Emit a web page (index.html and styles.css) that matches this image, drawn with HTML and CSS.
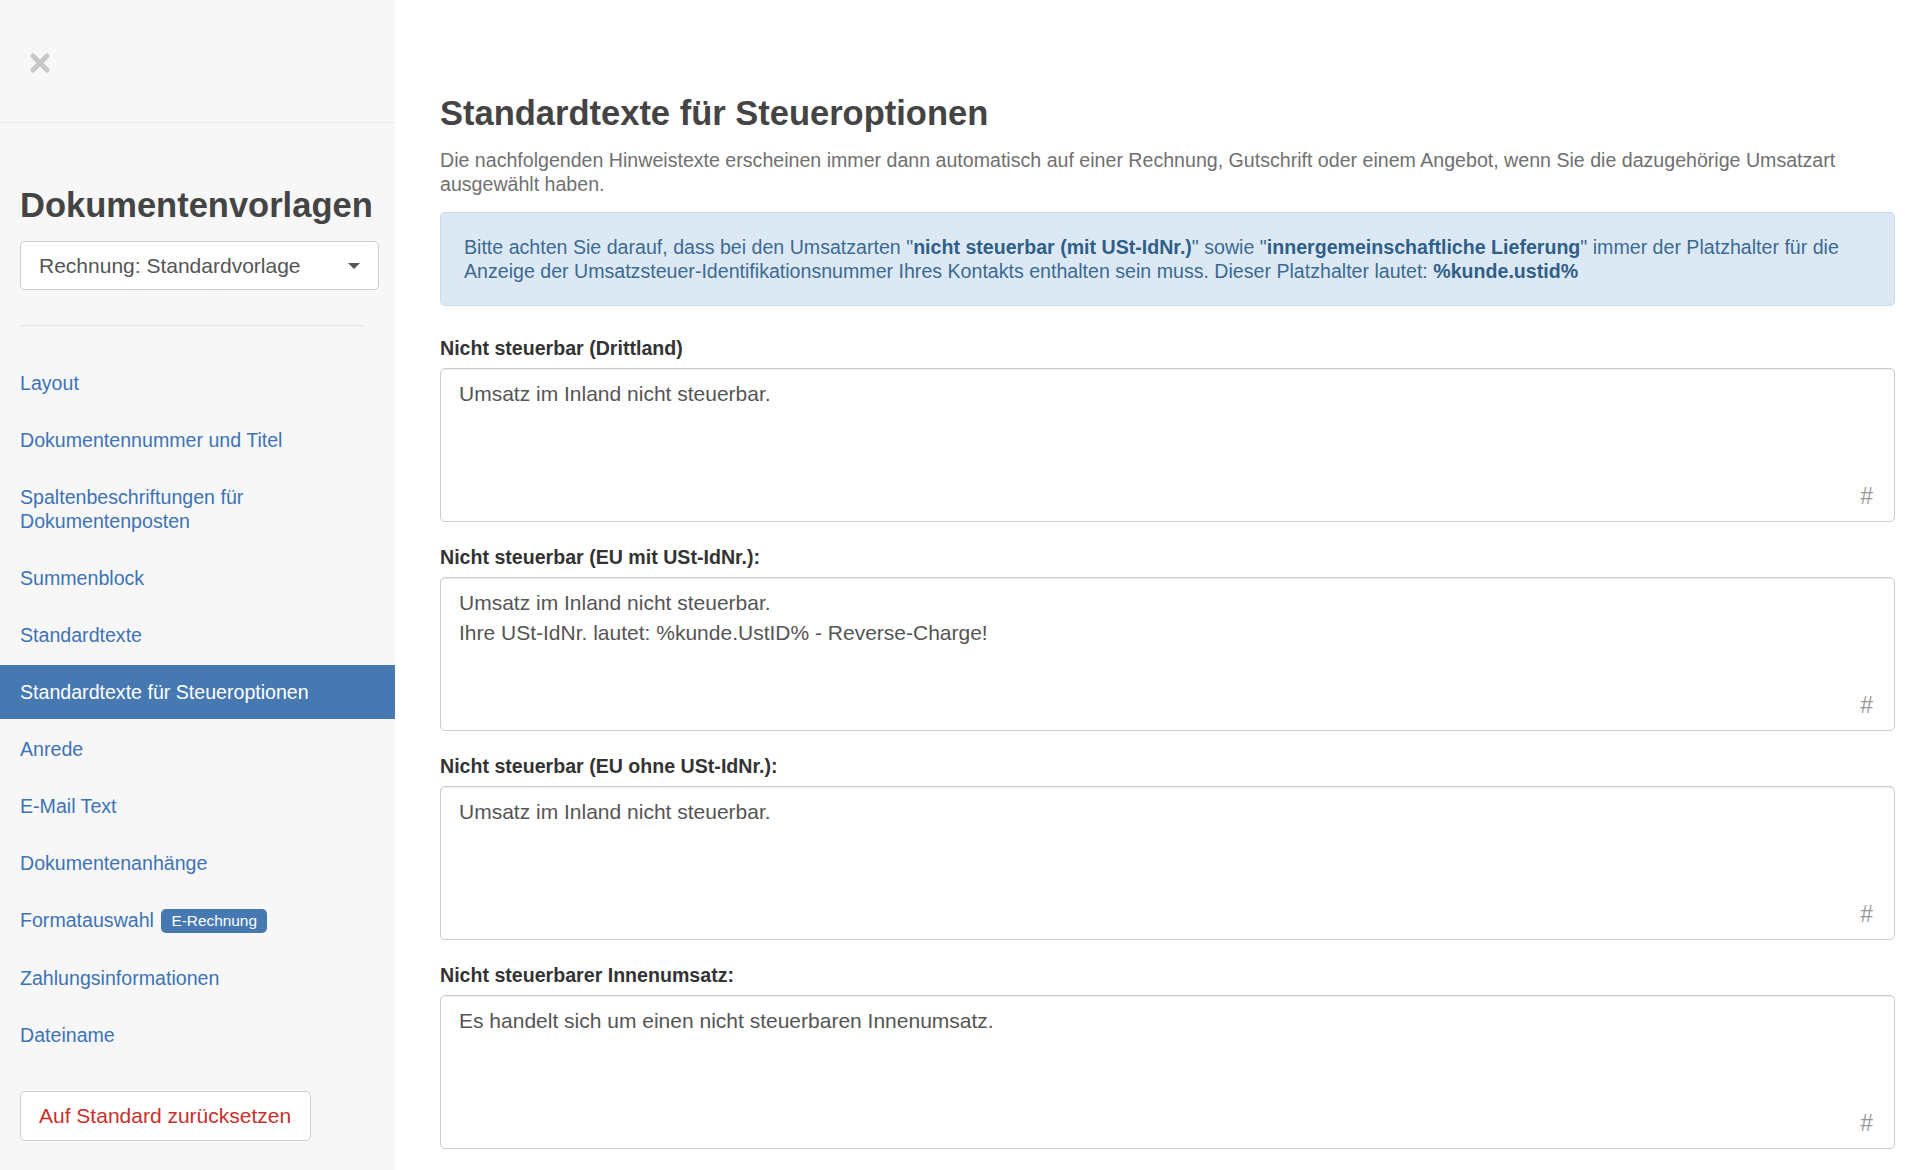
FILE: index.html
```html
<!DOCTYPE html>
<html lang="de">
<head>
    <meta charset="UTF-8">
    <title>Dokumentenvorlagen</title>
    <link rel="stylesheet" href="styles.css">
</head>
<body>
    <aside class="sidebar">
        <div class="sidebar-top">
            <svg class="close-icon" width="22" height="22" viewBox="0 0 22 22">
                <path d="M4 4 L18 18 M18 4 L4 18" stroke="#c8c8c8" stroke-width="5" stroke-linecap="round"/>
            </svg>
        </div>

        <h2 class="sidebar-title">Dokumentenvorlagen</h2>
        <div class="template-select">
            <span>Rechnung: Standardvorlage</span>
            <span class="caret"></span>
        </div>
        <hr class="sidebar-divider">

        <!-- Navigation der Vorlagen-Abschnitte -->
        <ul class="nav">
            <li><a href="#">Layout</a></li>
            <li><a href="#">Dokumentennummer und Titel</a></li>
            <li><a href="#">Spaltenbeschriftungen für Dokumentenposten</a></li>
            <li><a href="#">Summenblock</a></li>
            <li><a href="#">Standardtexte</a></li>
            <li class="active"><a href="#">Standardtexte für Steueroptionen</a></li>
            <li><a href="#">Anrede</a></li>
            <li><a href="#">E-Mail Text</a></li>
            <li><a href="#">Dokumentenanhänge</a></li>
            <li><a href="#">Formatauswahl <span class="badge">E-Rechnung</span></a></li>
            <li><a href="#">Zahlungsinformationen</a></li>
            <li><a href="#">Dateiname</a></li>
        </ul>

        <button class="reset-btn">Auf Standard zurücksetzen</button>
    </aside>

    <main class="content">
        <h1>Standardtexte für Steueroptionen</h1>
        <p class="lead">Die nachfolgenden Hinweistexte erscheinen immer dann automatisch auf einer Rechnung, Gutschrift oder einem Angebot, wenn Sie die dazugehörige Umsatzart ausgewählt haben.</p>

        <div class="alert-info">
            Bitte achten Sie darauf, dass bei den Umsatzarten "<b>nicht steuerbar (mit USt-IdNr.)</b>" sowie "<b>innergemeinschaftliche Lieferung</b>" immer der Platzhalter für die Anzeige der Umsatzsteuer-Identifikationsnummer Ihres Kontakts enthalten sein muss. Dieser Platzhalter lautet: <b>%kunde.ustid%</b>
        </div>

        <div class="form-group">
            <label>Nicht steuerbar (Drittland)</label>
            <div class="field-box">
                <textarea>Umsatz im Inland nicht steuerbar.</textarea>
                <span class="hash">#</span>
            </div>
        </div>

        <div class="form-group">
            <label>Nicht steuerbar (EU mit USt-IdNr.):</label>
            <div class="field-box">
                <textarea>Umsatz im Inland nicht steuerbar.
Ihre USt-IdNr. lautet: %kunde.UstID% - Reverse-Charge!</textarea>
                <span class="hash">#</span>
            </div>
        </div>

        <div class="form-group">
            <label>Nicht steuerbar (EU ohne USt-IdNr.):</label>
            <div class="field-box">
                <textarea>Umsatz im Inland nicht steuerbar.</textarea>
                <span class="hash">#</span>
            </div>
        </div>

        <div class="form-group">
            <label>Nicht steuerbarer Innenumsatz:</label>
            <div class="field-box">
                <textarea>Es handelt sich um einen nicht steuerbaren Innenumsatz.</textarea>
                <span class="hash">#</span>
            </div>
        </div>
    </main>
</body>
</html>
```

FILE: styles.css
```css
body {
    margin: 0;
    display: flex;
    min-height: 100vh;
    font-family: 'Liberation Sans', Arial, sans-serif;
    font-size: 19.6px;
    line-height: 24px;
    color: #333;
    background-color: white;
}

/* Seitenleiste */
.sidebar {
    width: 395px;
    flex-shrink: 0;
    background-color: #f7f7f7;
}
.sidebar-top {
    height: 123px;
    box-sizing: border-box;
    padding: 52px 0 0 29px;
    border-bottom: 1px solid #e9e9e9;
}
.close-icon {
    display: block;
}
.sidebar-title {
    margin: 62px 16px 16px 20px;
    font-size: 34.5px;
    line-height: 40px;
    font-weight: bold;
    color: #444;
}
.template-select {
    margin: 0 16px 0 20px;
    height: 49px;
    box-sizing: border-box;
    padding: 0 18px;
    display: flex;
    align-items: center;
    justify-content: space-between;
    background-color: white;
    border: 1px solid #ccc;
    border-radius: 5px;
    font-size: 21px;
    color: #555;
}
.caret {
    width: 0;
    height: 0;
    border-left: 6px solid transparent;
    border-right: 6px solid transparent;
    border-top: 6px solid #555;
}
.sidebar-divider {
    margin: 35px 30px 0 20px;
    border: none;
    border-top: 1px solid #e6e6e6;
}

.nav {
    list-style: none;
    margin: 30px 0 0;
    padding: 0;
}
.nav li + li {
    margin-top: 3px;
}
.nav a {
    display: block;
    padding: 15px 20px;
    color: #3d73b5;
    text-decoration: none;
}
.nav a:hover {
    background-color: #eee;
}
.nav li.active a {
    background-color: #4678b2;
    color: white;
}
.badge {
    display: inline-block;
    margin-left: 2px;
    padding: 0 10px;
    font-size: 15.4px;
    line-height: 24px;
    color: white;
    background-color: #4678b2;
    border-radius: 5px;
    vertical-align: 1px;
}

.reset-btn {
    margin: 29px 0 0 20px;
    width: 291px;
    height: 50px;
    padding: 0 18px;
    text-align: left;
    font-family: inherit;
    font-size: 21px;
    color: #c9302c;
    background-color: white;
    border: 1px solid #ccc;
    border-radius: 5px;
    cursor: pointer;
}

/* Inhaltsbereich */
.content {
    flex: 1;
    padding: 0 23px 20px 45px;
}
.content h1 {
    margin: 93px 0 15px;
    font-size: 34.5px;
    line-height: 40px;
    font-weight: bold;
    color: #444;
}
.lead {
    margin: 0 0 16px;
    color: #707070;
}
.alert-info {
    padding: 22px 23px;
    background-color: #dce9f5;
    border: 1px solid #c6ddef;
    border-radius: 5px;
    color: #3b6a92;
}
.alert-info b {
    color: #2f5f88;
}

.form-group {
    margin-top: 30px;
}
.form-group + .form-group {
    margin-top: 23px;
}
.form-group label {
    display: block;
    margin-bottom: 8px;
    font-weight: bold;
    color: #333;
}
.field-box {
    position: relative;
}
.field-box textarea {
    display: block;
    width: 100%;
    height: 154px;
    box-sizing: border-box;
    padding: 10px 18px 6px;
    font-family: inherit;
    font-size: 21px;
    line-height: 30px;
    color: #555;
    border: 1px solid #ccc;
    border-radius: 5px;
    box-shadow: inset 0 1px 1px rgba(0, 0, 0, 0.075);
    resize: none;
    overflow: hidden;
}
.hash {
    position: absolute;
    right: 22px;
    bottom: 14px;
    font-size: 23px;
    color: #999;
}
```
